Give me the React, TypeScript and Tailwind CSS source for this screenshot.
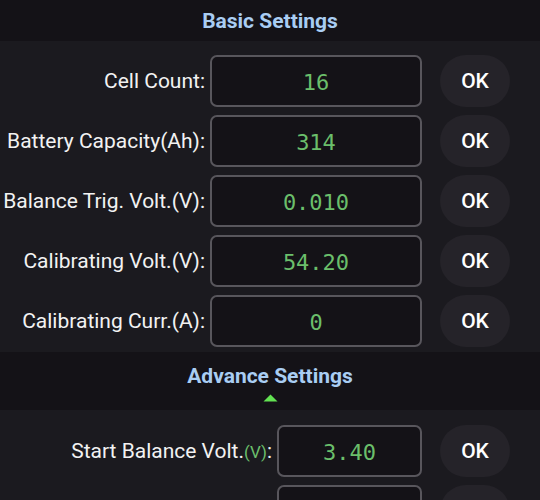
import React from "react";

type Row = { label: string; unit?: string; value: string };

const BASIC: Row[] = [
  { label: "Cell Count:", value: "16" },
  { label: "Battery Capacity(Ah):", value: "314" },
  { label: "Balance Trig. Volt.(V):", value: "0.010" },
  { label: "Calibrating Volt.(V):", value: "54.20" },
  { label: "Calibrating Curr.(A):", value: "0" },
];

const ADVANCE: Row[] = [
  { label: "Start Balance Volt.", unit: "(V)", value: "3.40" },
  { label: "Max Balance Curr.", unit: "(A)", value: "2.0" },
];

function Title({ children }: { children: React.ReactNode }) {
  return <h2 className="text-[21px] leading-[26px] font-bold text-[#a9cdf3]">{children}</h2>;
}

function SettingRow({ row, labelW, inputW }: { row: Row; labelW: string; inputW: string }) {
  return (
    <div className="flex items-center">
      <div className={`${labelW} shrink-0 pr-[5px] pt-[2px] text-right text-[21px] text-[#f2f2f2] whitespace-nowrap`}>
        {row.label}
        {row.unit && <span className="text-[17px] text-[#6bbf6b]">{row.unit}</span>}
        {row.unit && ":"}
      </div>
      <div className={`${inputW} h-[52px] shrink-0 flex items-center justify-center pt-[3px] rounded-[7px] border-2 border-[#58565c] bg-[#141217] text-[22px] text-[#6bbf6b] font-['DejaVu_Sans_Mono',monospace]`}>
        {row.value}
      </div>
      <button className="ml-[18px] w-[70px] h-[52px] shrink-0 rounded-full bg-[#252329] pt-[1px] text-[21px] font-medium text-white">
        OK
      </button>
    </div>
  );
}

export default function App() {
  return (
    <div className="w-[540px] h-[500px] overflow-hidden bg-[#141217] font-['Roboto','Liberation_Sans',sans-serif]">
      <div className="h-[41px] flex items-center justify-center">
        <Title>Basic Settings</Title>
      </div>
      <div className="bg-[#1b1a1f] pt-[14px] pb-[5px] flex flex-col gap-2">
        {BASIC.map((r) => (
          <SettingRow key={r.label} row={r} labelW="w-[210px]" inputW="w-[212px]" />
        ))}
      </div>
      <div className="h-[58px] flex flex-col items-center pt-[11px]">
        <Title>Advance Settings</Title>
        <svg width="15" height="8" viewBox="0 0 15 8" className="mt-[5px]">
          <path d="M7.5 0.5 L14.5 7.5 L0.5 7.5 Z" fill="#62e252" />
        </svg>
      </div>
      <div className="bg-[#1b1a1f] pt-[15px] pb-[5px] flex flex-col gap-2">
        {ADVANCE.map((r) => (
          <SettingRow key={r.label} row={r} labelW="w-[277px]" inputW="w-[145px]" />
        ))}
      </div>
    </div>
  );
}
